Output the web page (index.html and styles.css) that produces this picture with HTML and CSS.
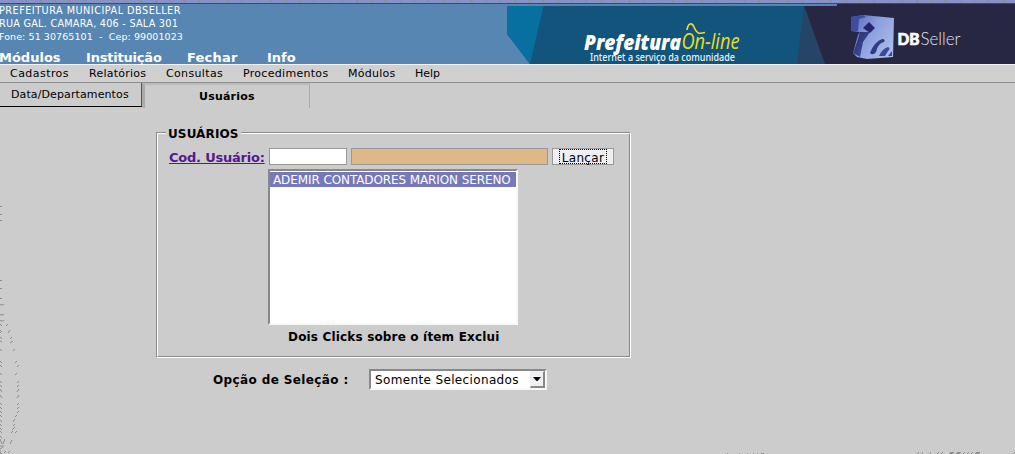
FILE: index.html
```html
<!DOCTYPE html>
<html lang="pt-BR">
<head>
<meta charset="utf-8">
<title>Prefeitura On-line</title>
<link rel="stylesheet" href="styles.css">
</head>
<body>
<div class="strip"></div>
<header class="header">
  <div class="info">
    <p class="l1">PREFEITURA MUNICIPAL DBSELLER</p>
    <p class="l2">RUA GAL. CAMARA, 406 - SALA 301</p>
    <p class="l3">Fone: 51 30765101 &nbsp;- &nbsp;Cep: 99001023</p>
    <nav class="main-nav"><a class="n1">Módulos</a><a class="n2">Instituição</a><a class="n3">Fechar</a><a class="n4">Info</a></nav>
  </div>
  <svg class="banner" width="508" height="60" viewBox="507 4 508 60">
    <defs>
      <linearGradient id="cube" x1="0" y1="0" x2="1" y2="0.7"><stop offset="0" stop-color="#5164bb"/><stop offset=".5" stop-color="#8c9fdf"/><stop offset="1" stop-color="#a9bbea"/></linearGradient>
      <linearGradient id="cubeSide" x1="0" y1="0" x2="1" y2="1"><stop offset="0" stop-color="#272c68"/><stop offset="1" stop-color="#4656a8"/></linearGradient>
      <filter id="soft"><feGaussianBlur stdDeviation="0.6"/></filter>
    </defs>
    <rect x="507" y="4" width="508" height="60" fill="#5886b2"/>
    <path d="M507 6H806V64H530L507 34Z" fill="#13547c"/>
    <path d="M507 6H543.500L530 64L507 34Z" fill="#0870a0"/>
    <path d="M804 6L797 64H826Z" fill="#244567"/>
    <path d="M804 6H837V4H1015V64H825Z" fill="#272744"/>
    <g filter="url(#soft)">
      <path d="M851 17L863 15L894 18L893 57L867 59L857 57L853 53L858 35L860 32L851 31Z" fill="url(#cube)"/>
      <path d="M851 17L863 15L866 17L859 19L858 31L851 31Z" fill="#414e9f"/>
      <path d="M869 22L875 28L870 33L863 28Z" fill="#25266e"/>
      <path d="M860 32L870 32L863 42L860 57L853 53L857 42Z" fill="url(#cubeSide)"/>
      <path d="M870 53Q874 42 882 39Q886 39 884 42Q878 43 876 52Q873 56 870 53Z" fill="#313b86"/>
      <path d="M879 56Q882 49 888 47Q891 48 888 51L885 56Z" fill="#3c4898"/>
      <path d="M888 56L892 51L892 56Z" fill="#3c4898"/>
    </g>
    <text class="brand" x="584" y="49.500" textLength="97" lengthAdjust="spacingAndGlyphs">Prefeitura</text>
    <text class="online" x="681.500" y="49" textLength="58" lengthAdjust="spacingAndGlyphs">On-line</text>
    <path d="M687 30C688 23 692 22 694 27C697 34 699 34 705 32.500" fill="none" stroke="#e9e01d" stroke-width="1.700"/>
    <text class="slogan" x="590" y="61" textLength="145" lengthAdjust="spacingAndGlyphs">Internet a serviço da comunidade</text>
    <text class="db" x="897.500" y="45" textLength="22" lengthAdjust="spacingAndGlyphs">DB</text>
    <text class="seller" x="920.500" y="45" textLength="40" lengthAdjust="spacingAndGlyphs">Seller</text>
  </svg>
</header>
<nav class="menu"><a class="m1">Cadastros</a><a class="m2">Relatórios</a><a class="m3">Consultas</a><a class="m4">Procedimentos</a><a class="m5">Módulos</a><a class="m6">Help</a></nav>
<main class="page">
  <svg class="watermark" width="1015" height="371" viewBox="0 83 1015 371">
    <path class="dots" d="M0 206.500h2M0 214.500h2M0 220.500h2M0 280.500h2M0 288.500h2M0 298.500h2"/>
    <path class="dots" d="M0 304l1 1h2l1-1M0 314l1 1h2l1-1M0 320l1 1h2l1-1M0 324l2 2M6 326l2-2M0 330l2 2M0 332l1 1M8 333l2-3M0 337l2 2M10 339l2-2M0 341l2 1M10 343l3-2M0 349l2 2M13 351l2-2M0 361l2 2M15 363l2-2M0 365l2 2M17 367l2-2M0 373l2 2M15 375l2-2M0 381l2 2M17 383l2-2M0 385l2 2M17 387l2-2M0 389l2 3M17 392l2-3M0 395l2 3M17 398l2-3M0 403l2 2M17 405l2-2M0 407l2 2M17 409l2-2M0 411l2 2M17 413l2-2M0 415l2 2M15 417l2-2M0 420l2 2M13 422l2-3M0 424l2 2M13 426l2-2M0 428l2 2M12 430l3-3M0 431l2 2M11 433l2-2M15 433l2-2M0 436l2 2M0 439l2 5M3 444l2-5M10 444l2-4M0 446l4 0M0 449l3-2M0 452l2 2M4 453l2-2M8 453l2-2M0 450v4"/>
    <path class="dots" d="M727 453.500h1M739 453.500h1M747 453.500h1M753 453.500h1M757 453.500h1M761 453.500h3M917 454l2-2M921 454l2-2M929 454l2-2M937 454l2-2M941 454l2-2M949 453.500h4M950 452.500h4M956 453.500h4M957 452.500h4M963 454l2-2M967 454l2-2M971 454l2-2M975 453.500h4M976 452.500h4M1013 454l2-2"/>
  </svg>
  <div class="tabs"><div class="tab"><span class="t1">Data/Departamentos</span></div><div class="tab active"><span class="t2">Usuários</span></div></div>
  <section class="frame">
    <h2 class="legend"><span>USUÁRIOS</span></h2>
    <div class="frame-inner">
      <div class="fields"><a class="label">Cod. Usuário:</a><input class="code" aria-label="Código"><input class="name" aria-label="Nome" readonly><button class="launch"><span>Lançar</span></button></div>
      <div class="list"><div class="item"><span>ADEMIR CONTADORES MARION SERENO</span></div></div>
      <p class="hint">Dois Clicks sobre o ítem Exclui</p>
    </div>
  </section>
  <div class="option"><span class="option-label">Opção de Seleção :</span>
    <div class="select"><span class="value">Somente Selecionados</span><span class="arrow"><svg width="8" height="4" viewBox="0 0 8 4"><path d="M0 0H8L4.500 4H3.500Z"/></svg></span></div>
  </div>
</main>
</body>
</html>
```
FILE: styles.css
```css
* { box-sizing: border-box; }
body { margin: 0; width: 1015px; height: 454px; overflow: hidden; background: #ccc; color: #000; font-family: "DejaVu Sans", sans-serif; font-size: 11px; white-space: nowrap; }
p, h2 { margin: 0; }
.strip { height: 4px; border-bottom: 1px solid #3d4481; background: repeating-linear-gradient(50deg, #8792c6 0 10px, #8b8b99 10px 11px); }
.header { display: flex; justify-content: space-between; height: 60px; background: #5886b2; color: #fff; }
.info { margin-left: -1px; font-size: 10px; line-height: 13px; }
.info p { height: 13px; }
.l1 { font-size: 9.7px; letter-spacing: .49px; }
.l2 { font-size: 9.7px; letter-spacing: .24px; }
.l3 { font-size: 9.5px; letter-spacing: .08px; }
.main-nav { display: flex; padding-top: 6px; font-size: 13px; font-weight: bold; line-height: 17px; }
.n1 { width: 87px; }
.n2 { width: 101px; letter-spacing: -.2px; }
.n3 { width: 80px; letter-spacing: .2px; }
.banner { display: block; }
.brand { font: italic 800 21px "Open Sans", sans-serif; fill: #fff; }
.online { font: italic 21px "Open Sans", sans-serif; fill: #e9e01d; }
.slogan { font: 500 10px "Noto Sans", sans-serif; fill: #e8f3fa; }
.db { font: 900 17px Lato, sans-serif; fill: #fff; stroke: #fff; stroke-width: .7px; }
.seller { font: 300 18px Lato, sans-serif; fill: #e2e2ee; }
.menu { display: flex; height: 19px; padding-left: 10px; border-top: 1px solid #f2f2f2; border-bottom: 1px solid #8e8e8e; background: #d0d0d0; line-height: 17px; }
.m1 { width: 79px; letter-spacing: .45px; }
.m2 { width: 77px; letter-spacing: .25px; }
.m3 { width: 77px; letter-spacing: .35px; }
.m4 { width: 105px; letter-spacing: .3px; }
.m5 { width: 67px; letter-spacing: .25px; }
.page { position: relative; height: 371px; }
.watermark { position: absolute; inset: 0; z-index: 0; }
.dots { fill: none; stroke: #8c8c8c; stroke-width: 1; }
.tabs { position: relative; display: flex; height: 25px; }
.tab { width: 142px; height: 24px; padding-left: 11px; border-right: 1px solid #555; border-bottom: 1px solid #000; background: #ccc; line-height: 23px; letter-spacing: .11px; }
.tab.active { width: 168px; height: 25px; padding-left: 54px; border: 0 solid #aaa; border-width: 2px 1px 0 3px; border-top-color: #bbb; font-weight: bold; letter-spacing: .2px; }
.frame { position: relative; width: 475px; height: 226px; margin: 24px 0 0 156px; border: 1px solid; border-color: #8a8a8a #fff #fff #8a8a8a; }
.frame-inner { height: 224px; padding: 14px 0 0 11px; border: 1px solid; border-color: #fff #8a8a8a #8a8a8a #fff; }
.legend { position: absolute; left: 9px; top: -7px; width: 75px; padding-left: 2px; background: #ccc; font-size: 12px; line-height: 16px; letter-spacing: .12px; }
.fields { display: flex; align-items: flex-start; height: 21px; font-size: 13px; }
.label { margin-right: 4.500px; width: 95.500px; color: #551a8b; font-weight: bold; line-height: 19px; letter-spacing: -.22px; text-decoration: underline; }
.code, .name { height: 17px; margin: 0 4px 0 0; padding: 0; border: 1px solid #999; background: #fff; }
.code { width: 78px; }
.name { width: 197px; background: #deb887; }
.launch { width: 62px; height: 17px; padding: 0 6px; border: 1px solid #999; background: #eeeef3; font: 12px/15px "DejaVu Sans", sans-serif; letter-spacing: .35px; }
.launch span { display: block; height: 15px; border: 1px dotted #000; line-height: 16px; }
.list { width: 250px; height: 156px; margin-left: 99px; padding-top: 1px; border: 2px solid; border-color: #888 #f8f8f8 #f8f8f8 #888; background: #fff; }
.item { height: 15px; padding-left: 3px; background: #7678b8; color: #fff; font-size: 12px; line-height: 17px; letter-spacing: -.1px; }
.hint { margin: 4px 0 0 119px; font-size: 12px; font-weight: bold; line-height: 17px; letter-spacing: .17px; }
.option { position: relative; display: flex; margin: 11px 0 0 213px; font-size: 12px; line-height: 21px; }
.option-label { width: 156px; padding-top: 1px; font-weight: bold; letter-spacing: .38px; }
.select { display: flex; justify-content: space-between; width: 178px; height: 21px; padding: 0 0 0 4px; border: 2px solid; border-color: #888 #f8f8f8 #f8f8f8 #888; background: #fff; line-height: 18px; letter-spacing: .36px; }
.arrow { display: flex; align-items: center; justify-content: center; width: 15px; height: 17px; border: 1px solid; border-width: 1px 2px 2px 1px; border-color: #eeeef3 #888 #888 #eeeef3; background: #eeeef3; }
```
